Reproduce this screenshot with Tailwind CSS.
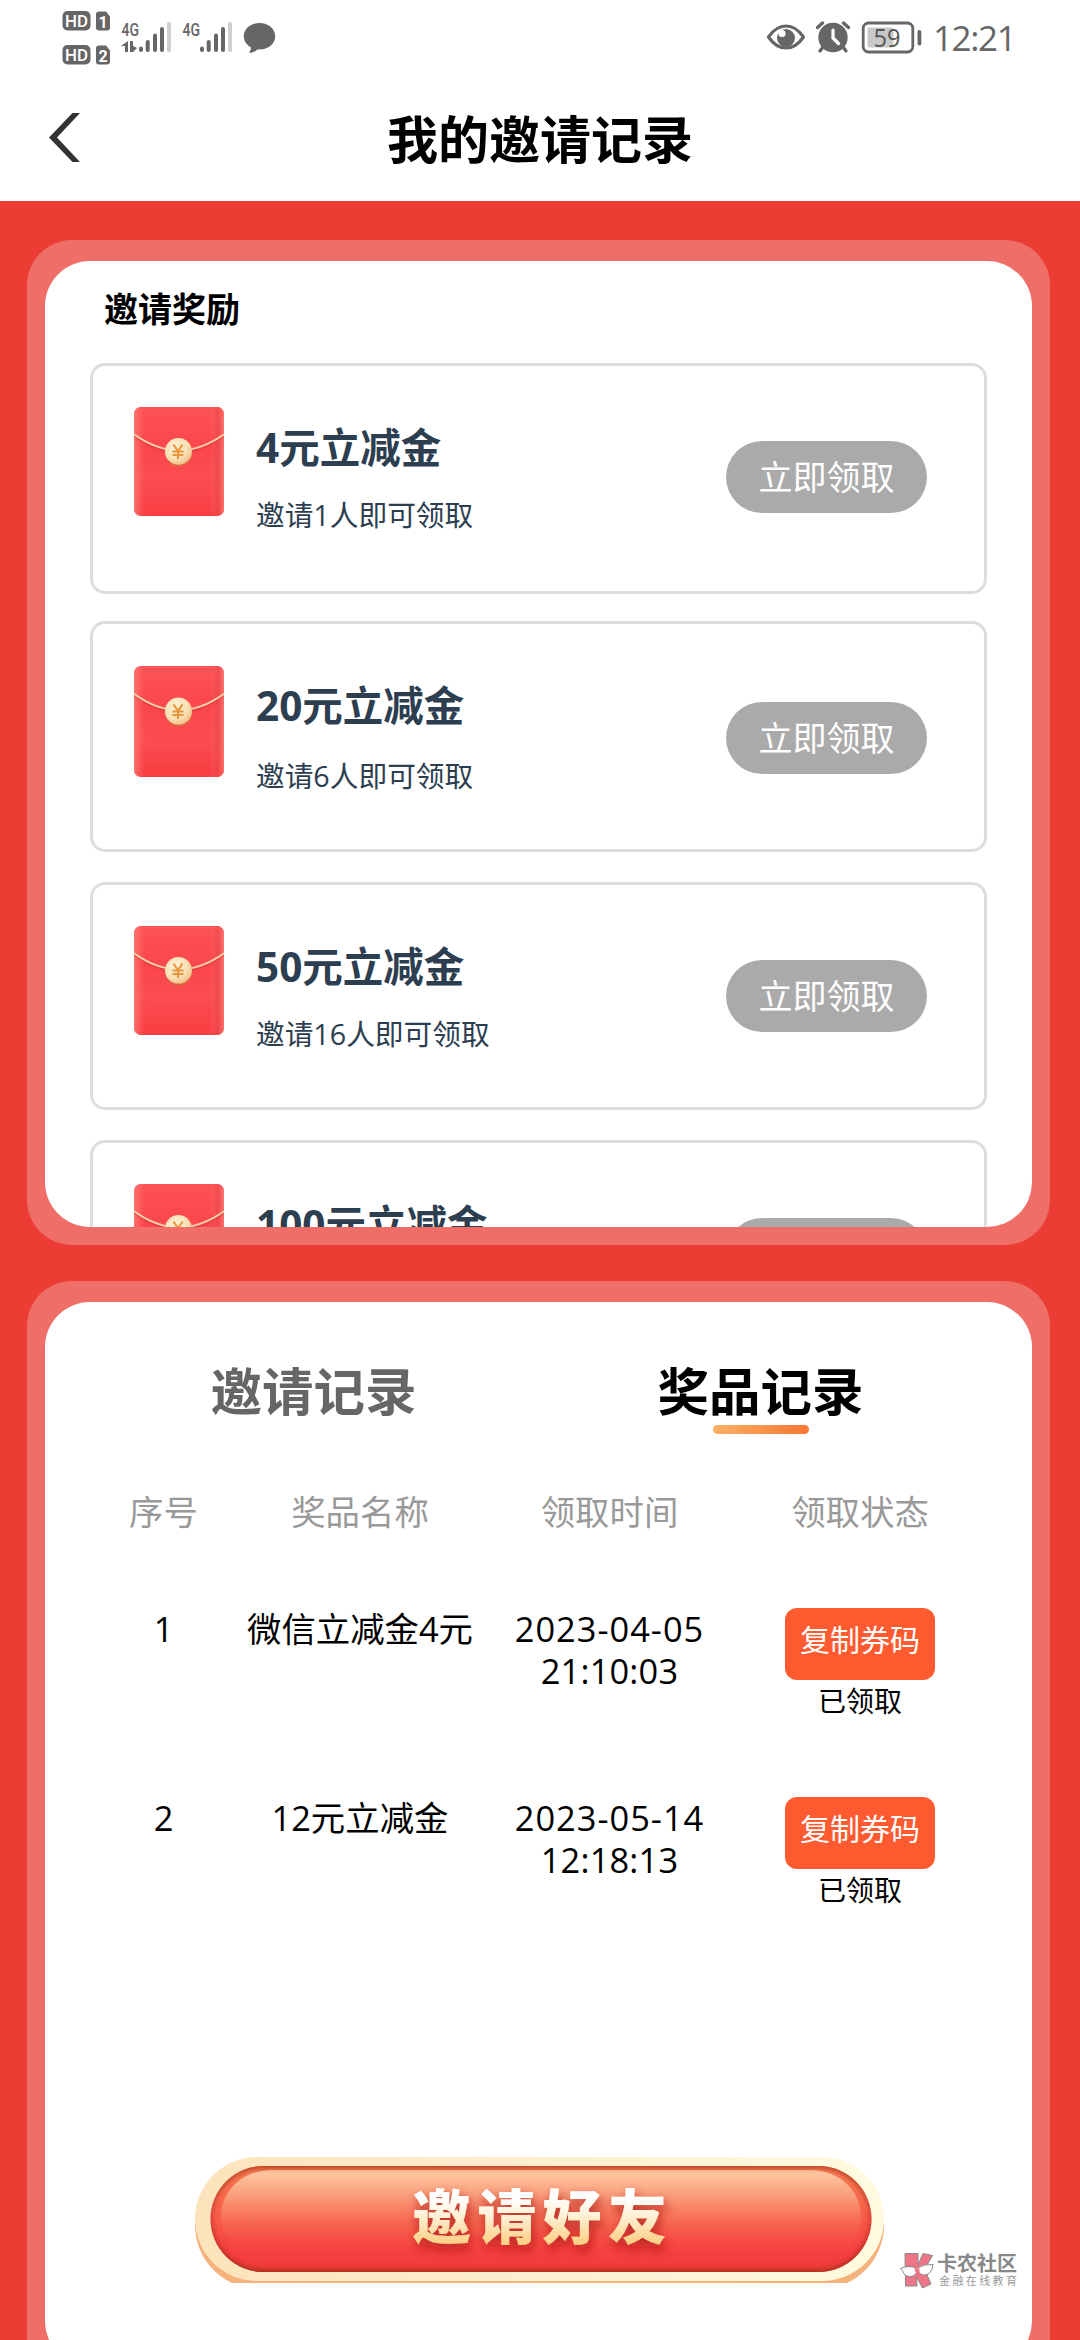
<!DOCTYPE html>
<html lang="zh-CN">
<head>
<meta charset="utf-8">
<title>我的邀请记录</title>
<script src="https://cdn.jsdelivr.net/npm/@tailwindcss/browser@4"></script>
</head>
<body class="w-[1080px] h-[2340px] overflow-hidden bg-[#ec3d35] font-['Open_Sans','Noto_Sans_CJK_SC',sans-serif] text-black">
<svg class="absolute size-0" aria-hidden="true">
  <defs>
    <linearGradient id="red" x1="0" y1="0" x2="0" y2="1"><stop offset="0" stop-color="#fb5659"/><stop offset=".3" stop-color="#f94449"/><stop offset=".65" stop-color="#fb4e50"/><stop offset="1" stop-color="#f73d42"/></linearGradient>
    <linearGradient id="edge" x1="0" y1="0" x2="1" y2="0"><stop offset="0" stop-color="#ff7d78" stop-opacity=".8"/><stop offset=".12" stop-color="#ff6a68" stop-opacity="0"/><stop offset=".84" stop-color="#ff6a68" stop-opacity="0"/><stop offset=".93" stop-color="#e8484a" stop-opacity=".6"/><stop offset="1" stop-color="#ff7d78" stop-opacity=".8"/></linearGradient>
    <radialGradient id="coin" cx=".4" cy=".35" r=".75"><stop offset="0" stop-color="#fdf3d6"/><stop offset=".6" stop-color="#f8deb4"/><stop offset="1" stop-color="#efb070"/></radialGradient>
    <symbol id="packet" viewBox="0 0 92 112">
      <rect x="1" y="1" width="90" height="110" rx="7" fill="url(#red)"/>
      <path d="M8 1h76a7 7 0 0 1 7 7v22Q46 62 1 30V8a7 7 0 0 1 7-7z" fill="#ff5053" fill-opacity=".4"/>
      <rect x="1" y="1" width="90" height="110" rx="7" fill="url(#edge)"/>
      <path d="M1 30Q46 63 91 30" fill="none" stroke="#c8323a" stroke-opacity=".4" stroke-width="2"/>
      <path d="M1 28.500Q46 61 91 28.500" fill="none" stroke="#fbd0a8" stroke-width="2"/>
      <circle cx="45.500" cy="47.500" r="13.500" fill="#d8683f"/>
      <circle cx="45.500" cy="45.800" r="13.500" fill="url(#coin)"/>
      <path d="M40.500 39l4.500 6.500 4.500-6.500M39.500 46h11M39.500 49.500h11M45 45.500v8" fill="none" stroke="#e8963c" stroke-width="2"/>
    </symbol>
  </defs>
</svg>

<header class="h-[201px] bg-white">
  <div class="flex h-[72px] items-start justify-between pl-[62px] pr-[63px] pt-[10px]">
    <svg class="h-[56px] w-[216px]" viewBox="62 10 216 56" fill="#666" font-family="Roboto, sans-serif" font-weight="700">
      <rect x="62.500" y="11" width="28" height="19.500" rx="5"/>
      <rect x="62.500" y="45" width="28" height="19.500" rx="5"/>
      <path d="M99 11.500h7l4 5V27.500a3 3 0 0 1-3 3h-8a3 3 0 0 1-3-3v-13a3 3 0 0 1 3-3zM99 45.500h7l4 5V61.500a3 3 0 0 1-3 3h-8a3 3 0 0 1-3-3v-13a3 3 0 0 1 3-3z"/>
      <g fill="#fff" font-size="17">
        <text x="65" y="27" textLength="23" lengthAdjust="spacingAndGlyphs" font-weight="500">HD</text>
        <text x="65" y="61" textLength="23" lengthAdjust="spacingAndGlyphs" font-weight="500">HD</text>
        <text x="98.500" y="27.500" font-size="16">1</text>
        <text x="98.500" y="61.500" font-size="16">2</text>
      </g>
      <text x="121.500" y="35.500" font-size="18.500" font-weight="500" textLength="17.500" lengthAdjust="spacingAndGlyphs">4G</text>
      <text x="182.500" y="35.500" font-size="18.500" font-weight="500" textLength="17.500" lengthAdjust="spacingAndGlyphs">4G</text>
      <path d="M128 41v11h-3v-6h-4zM130 41h3v5l4 2-4 4h-3z"/>
      <g id="bars">
        <rect x="139" y="46.500" width="4" height="5.500" rx="2"/><rect x="145.700" y="40" width="4" height="12" rx="2"/><rect x="153" y="33.500" width="4" height="18.500" rx="2"/><rect x="160" y="27" width="4" height="25" rx="2"/><rect x="167" y="22" width="4" height="30" rx="1.500" fill="#d0d0d0"/>
      </g>
      <use href="#bars" x="61"/>
      <path d="M259.500 23c8.800 0 15.700 5.900 15.700 13.200s-6.900 13.300-15.700 13.300h-2c-2 1.800-5 3.300-8.500 3.300 1.300-1.800 2-3.600 2-5.400-4.300-2.400-7.200-6.600-7.200-11.200C243.800 28.900 250.700 23 259.500 23z"/>
    </svg>
    <div class="flex items-start">
      <svg class="mt-[10px] h-[36px] w-[164px]" viewBox="764 20 164 36" fill="#666">
        <path d="M768.500 37q7.500-11 17.500-11t17.500 11q-7.500 11-17.500 11t-17.500-11z" fill="none" stroke="#666" stroke-width="3.200" stroke-linejoin="round"/>
        <circle cx="786" cy="38" r="9"/><circle cx="782" cy="33.500" r="3.600" fill="#fff"/>
        <circle cx="833" cy="37.500" r="14.700"/>
        <path d="M817.500 27.500l5-4.500M848.500 27.500l-5-4.500M823 47l-3 4M843 47l3 4" stroke="#666" stroke-width="3.400" stroke-linecap="round"/>
        <path d="M833 30v8l5.500 5.500" fill="none" stroke="#fff" stroke-width="3.200" stroke-linecap="round"/>
        <rect x="863.200" y="23" width="49.600" height="29" rx="5.500" fill="none" stroke="#666" stroke-width="2.800"/>
        <rect x="867.500" y="27.500" width="26" height="20" rx="2" fill="#c8c8c8"/>
        <rect x="917.500" y="30" width="3.800" height="15.500" rx="1.800"/>
        <text x="873.500" y="46.500" font-family="Open Sans, sans-serif" font-size="25.500" textLength="27" lengthAdjust="spacingAndGlyphs" fill="#555">59</text>
      </svg>
      <span class="ml-[5px] mt-[4px] h-[48px] w-[84px] whitespace-nowrap text-[35px] leading-[48px] tracking-[-1.4px] text-[#666]">12:21</span>
    </div>
  </div>
  <div class="grid h-[129px] grid-cols-[80px_1fr_80px] items-start">
    <svg class="ml-[49px] mt-[41px] h-[49px] w-[31px]" viewBox="0 0 31 49"><path d="M23.500 0H31L8 24.500 31 49h-7.500L0 24.500z" fill="#333"/></svg>
    <h1 class="mt-[36px] text-center text-[51px] font-bold leading-[62px]">我的邀请记录</h1>
  </div>
</header>

<main class="flex flex-col gap-[36px] px-[27px] pr-[30px] pt-[39px]">
  <section class="h-[1005px] rounded-[45px] bg-[#ef6e68] px-[18px] pb-[18px] pt-[21px]">
    <div class="h-[966px] overflow-hidden rounded-[45px] bg-white px-[45px]">
      <h2 class="ml-[14px] pt-[24px] text-[34px] font-bold leading-[48px]">邀请奖励</h2>
      <div class="mt-[30px] flex flex-col gap-[30px]">
        <article class="-mb-[3px] flex h-[231px] items-start rounded-[15px] border-3 border-[#ddd] pl-[40px] pr-[57px]">
          <svg class="mt-[40px] h-[111px] w-[92px]" viewBox="0 0 92 112" preserveAspectRatio="none"><use href="#packet" width="92" height="112"/></svg>
          <div class="ml-[31px] flex-1 pt-[56px] text-[#2c3e50]">
            <h3 class="text-[40.5px] font-bold leading-[52px]">4元立减金</h3>
            <p class="mt-[21px] text-[28.7px] leading-[40px]">邀请1人即可领取</p>
          </div>
          <button class="mt-[75px] h-[72px] w-[201px] rounded-full bg-[#aaa] text-[34px] leading-[72px] text-white">立即领取</button>
        </article>
        <article class="flex h-[231px] items-start rounded-[15px] border-3 border-[#ddd] pl-[40px] pr-[57px]">
          <svg class="mt-[41px] h-[113px] w-[92px]" viewBox="0 0 92 112" preserveAspectRatio="none"><use href="#packet" width="92" height="112"/></svg>
          <div class="ml-[31px] flex-1 pt-[56px] text-[#2c3e50]">
            <h3 class="text-[40.5px] font-bold leading-[52px]">20元立减金</h3>
            <p class="mt-[24px] text-[28.7px] leading-[40px]">邀请6人即可领取</p>
          </div>
          <button class="mt-[78px] h-[72px] w-[201px] rounded-full bg-[#aaa] text-[34px] leading-[72px] text-white">立即领取</button>
        </article>
        <article class="flex h-[228px] items-start rounded-[15px] border-3 border-[#ddd] pl-[40px] pr-[57px]">
          <svg class="mt-[40px] h-[111px] w-[92px]" viewBox="0 0 92 112" preserveAspectRatio="none"><use href="#packet" width="92" height="112"/></svg>
          <div class="ml-[31px] flex-1 pt-[56px] text-[#2c3e50]">
            <h3 class="text-[40.5px] font-bold leading-[52px]">50元立减金</h3>
            <p class="mt-[21px] text-[28.7px] leading-[40px]">邀请16人即可领取</p>
          </div>
          <button class="mt-[75px] h-[72px] w-[201px] rounded-full bg-[#aaa] text-[34px] leading-[72px] text-white">立即领取</button>
        </article>
        <article class="flex h-[231px] items-start rounded-[15px] border-3 border-[#ddd] pl-[40px] pr-[57px]">
          <svg class="mt-[40px] h-[111px] w-[92px]" viewBox="0 0 92 112" preserveAspectRatio="none"><use href="#packet" width="92" height="112"/></svg>
          <div class="ml-[31px] flex-1 pt-[56px] text-[#2c3e50]">
            <h3 class="text-[40.5px] font-bold leading-[52px]">100元立减金</h3>
          </div>
          <button class="mt-[75px] h-[72px] w-[201px] rounded-full bg-[#aaa] text-[34px] leading-[72px] text-white">立即领取</button>
        </article>
      </div>
    </div>
  </section>

  <section class="h-[1103px] rounded-[45px] bg-[#ef6e68] px-[18px] pt-[21px]">
    <div class="h-[1064px] rounded-[45px] bg-white pl-[45px] pr-[48px] pt-[58px]">
      <nav class="grid grid-cols-2 text-center text-[51.5px] font-bold leading-[63px]">
        <span class="text-[#666]">邀请记录</span>
        <span class="flex flex-col items-center">奖品记录<i class="mt-[2px] h-[9px] w-[96px] rounded-full bg-linear-to-r from-[#fab062] to-[#fa7632]"></i></span>
      </nav>
      <div class="mt-[54px] grid grid-cols-[147px_246px_253px_248px] text-center text-[34.4px] leading-[48px] text-[#999]">
        <span>序号</span><span>奖品名称</span><span>领取时间</span><span>领取状态</span>
      </div>
      <div class="mt-[72px] grid h-[189px] grid-cols-[147px_246px_253px_248px] items-start text-center text-[34.4px] leading-[42px]">
        <span>1</span><span>微信立减金4元</span>
        <div class="flex flex-col items-center"><span class="tracking-[1px]">2023-04-05</span><span class="tracking-[0.2px]">21:10:03</span></div>
        <div class="flex flex-col items-center">
          <button class="h-[72px] w-[150px] rounded-xl bg-[#ff5a30] pb-[8px] text-[30px] leading-[64px] text-white">复制券码</button>
          <span class="text-[28px] leading-[42px]">已领取</span>
        </div>
      </div>
      <div class="grid h-[189px] grid-cols-[147px_246px_253px_248px] items-start text-center text-[34.4px] leading-[42px]">
        <span>2</span><span>12元立减金</span>
        <div class="flex flex-col items-center"><span class="tracking-[1px]">2023-05-14</span><span class="tracking-[0.2px]">12:18:13</span></div>
        <div class="flex flex-col items-center">
          <button class="h-[72px] w-[150px] rounded-xl bg-[#ff5a30] pb-[8px] text-[30px] leading-[64px] text-white">复制券码</button>
          <span class="text-[28px] leading-[42px]">已领取</span>
        </div>
      </div>
      <svg class="ml-[105px] mt-[171px] h-[126px] w-[689px]" viewBox="0 0 689 126">
        <defs>
          <linearGradient id="frame" x1="0" y1="0" x2="1" y2="0"><stop offset="0" stop-color="#fce3bb"/><stop offset=".5" stop-color="#fdeed0"/><stop offset="1" stop-color="#fffbe0"/></linearGradient>
          <linearGradient id="body" x1="0" y1="0" x2="0" y2="1"><stop offset="0" stop-color="#f97f55"/><stop offset=".45" stop-color="#f7604a"/><stop offset=".8" stop-color="#f53f41"/><stop offset="1" stop-color="#ee3a3a"/></linearGradient>
          <linearGradient id="gloss" x1="0" y1="0" x2="0" y2="1"><stop offset="0" stop-color="#fdcba4"/><stop offset=".3" stop-color="#f99a78"/><stop offset=".75" stop-color="#f7604a" stop-opacity=".2"/><stop offset="1" stop-color="#f7604a" stop-opacity="0"/></linearGradient>
          <linearGradient id="gold" x1="0" y1="0" x2="0" y2="1"><stop offset=".3" stop-color="#fff"/><stop offset=".5" stop-color="#fff3dc"/><stop offset=".85" stop-color="#fdcf85"/></linearGradient>
          <linearGradient id="rim" x1="0" y1="0" x2="0" y2="1"><stop offset="0" stop-color="#b83f22"/><stop offset=".2" stop-color="#b83f22" stop-opacity=".8"/><stop offset=".5" stop-color="#c8302a" stop-opacity=".6"/><stop offset="1" stop-color="#a83018"/></linearGradient>
          <filter id="soft" x="-5%" y="-20%" width="110%" height="140%"><feGaussianBlur stdDeviation="2"/></filter>
          <filter id="shade" x="-10%" y="-30%" width="120%" height="180%"><feDropShadow dx="2" dy="6" stdDeviation="6" flood-color="#a81018" flood-opacity=".75"/></filter>
          <clipPath id="pill"><rect x="15.500" y="9" width="661" height="106" rx="53"/></clipPath>
        </defs>
        <rect x="0" y="4" width="689" height="128" rx="64" fill="#f5b27c"/>
        <rect x="0" y="0" width="689" height="124" rx="62" fill="url(#frame)"/>
        <rect x="15.500" y="9" width="661" height="106" rx="53" fill="url(#body)"/>
        <g clip-path="url(#pill)">
          <rect x="26" y="13" width="640" height="92" rx="50" fill="url(#gloss)"/>
          <rect x="15" y="8.500" width="662" height="107" rx="53.500" fill="none" stroke="url(#rim)" stroke-width="6" filter="url(#soft)"/>
        </g>
        <text x="217" y="82" font-family="Noto Sans CJK SC, sans-serif" font-size="59" font-weight="900" letter-spacing="6.300" fill="url(#gold)" filter="url(#shade)">邀请好友</text>
      </svg>
    </div>
  </section>
</main>

<aside class="absolute left-[900px] top-[2252px] flex items-start">
  <svg class="h-[38px] w-[35px]" viewBox="0 0 35 38" stroke="#888" stroke-width="1" stroke-linejoin="round">
    <path d="M5 1.500h13v11L23 1.500l9.500 2-8 14L31 32l-8.500 4-6-11 .5 9H5.500z" fill="#ee7585"/>
    <path d="M.5 16.500q9-4 16 0 8-5 16.500-4-1 10-8.500 10.500-5 0-7-5-2 7-8 6.500-6-.5-7-6z" fill="#fff"/>
    <path d="M14.500 16.500h5v4l-3 3z" fill="#ee7585" stroke="none"/>
  </svg>
  <div class="ml-[2px] flex flex-col whitespace-nowrap">
    <span class="text-[20px] font-bold leading-[24px] text-[#888]">卡农社区</span>
    <span class="ml-[2px] text-[11px] leading-[12px] tracking-[2.400px] mt-[-1px] text-[#999]">金融在线教育</span>
  </div>
</aside>
</body>
</html>
